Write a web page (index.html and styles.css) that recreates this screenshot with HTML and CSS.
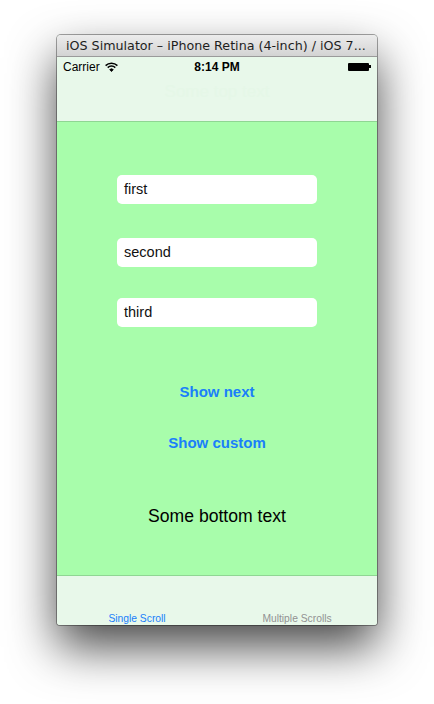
FILE: index.html
```html
<!DOCTYPE html>
<html>
<head>
<meta charset="utf-8">
<link rel="stylesheet" href="styles.css">
</head>
<body>
<div class="window">
  <div class="titlebar">iOS Simulator – iPhone Retina (4-inch) / iOS 7...</div>
  <div class="screen">
    <div class="topbar">
      <div class="status">
        <div class="status-left">
          <span class="carrier">Carrier</span>
          <svg class="wifi" width="13" height="10" viewBox="0 0 13 10">
            <path d="M0.6 3.6 A8.5 8.5 0 0 1 12.4 3.6" fill="none" stroke="#000" stroke-width="1.5"/>
            <path d="M2.7 5.6 A5.5 5.5 0 0 1 10.3 5.6" fill="none" stroke="#000" stroke-width="1.5"/>
            <path d="M4.7 7.6 A2.6 2.6 0 0 1 8.3 7.6 L6.5 9.6 Z" fill="#000" stroke="#000" stroke-width="0.8"/>
          </svg>
        </div>
        <div class="time">8:14 PM</div>
        <div class="status-right">
          <span class="battery"></span><span class="nub"></span>
        </div>
      </div>
      <div class="navtitle">Some top text</div>
    </div>
    <div class="content">
      <div class="field first">first</div>
      <div class="field second">second</div>
      <div class="field third">third</div>
      <div class="btn next">Show next</div>
      <div class="btn custom">Show custom</div>
      <div class="bottomtext">Some bottom text</div>
    </div>
    <div class="tabbar">
      <div class="tab active">Single Scroll</div>
      <div class="tab">Multiple Scrolls</div>
    </div>
  </div>
</div>
</body>
</html>
```

FILE: styles.css
```css
html, body {
  margin: 0;
  padding: 0;
  background: #ffffff;
}
body {
  width: 434px;
  height: 704px;
  overflow: hidden;
  padding: 35px 0 0 57px;
  box-sizing: border-box;
  font-family: "Liberation Sans", Arial, sans-serif;
}
.window {
  width: 320px;
  border-radius: 4px 4px 3px 3px;
  box-shadow: 0 22px 48px rgba(0,0,0,0.72), 0 0 0 1px rgba(0,0,0,0.35);
  background: #e8f8ea;
}
.titlebar {
  height: 22px;
  box-sizing: border-box;
  border-radius: 4px 4px 0 0;
  background: linear-gradient(#ececec, #d3d3d3);
  border-bottom: 1px solid #9a9a9a;
  font-family: "DejaVu Sans", sans-serif;
  font-size: 12.7px;
  line-height: 21px;
  color: #1e1e1e;
  padding-left: 9px;
  white-space: nowrap;
  overflow: hidden;
}
.screen {
  height: 568px;
  display: flex;
  flex-direction: column;
  border-radius: 0 0 3px 3px;
  overflow: hidden;
}
.topbar {
  height: 65px;
  box-sizing: border-box;
  background: #e8f8ea;
  border-bottom: 1px solid #8fd693;
  display: flex;
  flex-direction: column;
}
.status {
  height: 20px;
  display: flex;
  align-items: center;
  justify-content: space-between;
  padding: 0 6px;
  font-size: 12px;
  color: #000;
}
.status-left {
  display: flex;
  align-items: center;
  gap: 5px;
  width: 90px;
}
.wifi { margin-top: -1px; }
.time {
  font-weight: bold;
  font-size: 12px;
}
.status-right {
  width: 90px;
  display: flex;
  justify-content: flex-end;
  align-items: center;
}
.battery {
  width: 21px;
  height: 8px;
  background: #000;
  border-radius: 1px;
  margin-top: -1px;
}
.nub {
  width: 2px;
  height: 3px;
  background: #000;
  margin-top: -1px;
}
.navtitle {
  text-align: center;
  font-size: 17px;
  color: #e5f7e7;
  margin-top: 5px;
}
.content {
  flex: 1;
  background: #a8fdab;
  border-bottom: 1px solid #8fd693;
  display: flex;
  flex-direction: column;
  align-items: center;
}
.field {
  width: 200px;
  height: 29px;
  box-sizing: border-box;
  background: #fff;
  border-radius: 5px;
  padding-left: 7px;
  font-size: 14.5px;
  line-height: 29px;
  color: #111;
  align-self: flex-start;
  margin-left: 60px;
}
.first { margin-top: 53px; }
.second { margin-top: 34px; }
.third { margin-top: 31px; }
.btn {
  color: #1a7ffa;
  font-weight: bold;
  font-size: 15px;
  line-height: 18px;
}
.next { margin-top: 56px; }
.custom { margin-top: 33px; }
.bottomtext {
  margin-top: 54px;
  font-size: 17.6px;
  line-height: 20px;
  color: #000;
}
.tabbar {
  height: 49px;
  background: #e8f8ea;
  display: flex;
  align-items: flex-end;
}
.tab {
  flex: 1;
  text-align: center;
  font-size: 10.3px;
  line-height: 12px;
  color: #929292;
  padding-bottom: 0;
}
.tab.active {
  color: #1a7ffa;
}
```
